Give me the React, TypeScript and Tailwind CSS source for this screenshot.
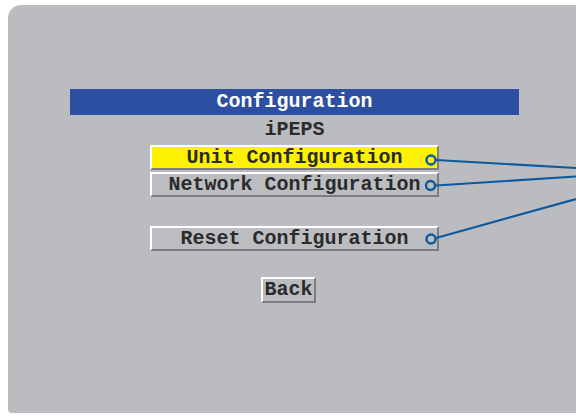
import React from 'react';

const font = { fontFamily: '"Liberation Mono", "DejaVu Sans Mono", monospace' };

function MenuButton({ label, active }: { label: string; active?: boolean }) {
    return (
        <div
            className={`w-[289px] h-[25px] flex items-center justify-center border-t-2 border-l-2 border-b-2 border-r-2 border-t-white border-l-white border-b-[#7c7d81] border-r-[#7c7d81] text-[20px] font-bold leading-none text-[#2b2b2b] whitespace-pre ${
                active ? 'bg-[#fff200]' : 'bg-[#bcbdc1]'
            }`}
        >
            {label}
        </div>
    );
}

function Connectors() {
    return (
        <svg
            className="absolute left-0 top-0 pointer-events-none"
            width="576"
            height="416"
            viewBox="0 0 576 416"
        >
            <g stroke="#0b5a9f" fill="none" strokeWidth="2.2">
                <line x1="436" y1="160" x2="576" y2="168" />
                <line x1="436" y1="185.5" x2="576" y2="176.5" />
                <line x1="436" y1="238" x2="576" y2="199" />
                <circle cx="431" cy="160" r="4.5" strokeWidth="2.4" />
                <circle cx="430.5" cy="185.5" r="4.5" strokeWidth="2.4" />
                <circle cx="431" cy="239" r="4.5" strokeWidth="2.4" />
            </g>
        </svg>
    );
}

export default function App() {
    return (
        <div className="relative w-[576px] h-[416px] bg-white overflow-hidden" style={font}>
            <div className="ml-[8px] mt-[5px] w-[580px] h-[408px] bg-[#bbbcc0] rounded-tl-[13px] rounded-tr-[13px] rounded-bl-[4px] pt-[84px] pl-[62px]">
                <div className="w-[449px] flex flex-col items-center">
                    <div className="w-full h-[26px] bg-[#2c4fa2] flex items-center justify-center text-white text-[20px] font-bold leading-none">
                        Configuration
                    </div>
                    <div className="h-[30px] flex items-center justify-center text-[#2b2b2b] text-[20px] font-bold leading-none">
                        iPEPS
                    </div>
                    <MenuButton label="Unit Configuration" active />
                    <div className="mt-[2px]">
                        <MenuButton label="Network Configuration" />
                    </div>
                    <div className="mt-[29px]">
                        <MenuButton label="Reset Configuration" />
                    </div>
                    <div className="self-start ml-[191px] mt-[26px] w-[55px] h-[26px] flex items-center justify-center border-2 border-t-white border-l-white border-b-[#7c7d81] border-r-[#7c7d81] text-[20px] font-bold leading-none text-[#2b2b2b]">
                        Back
                    </div>
                </div>
            </div>
            <Connectors />
        </div>
    );
}
